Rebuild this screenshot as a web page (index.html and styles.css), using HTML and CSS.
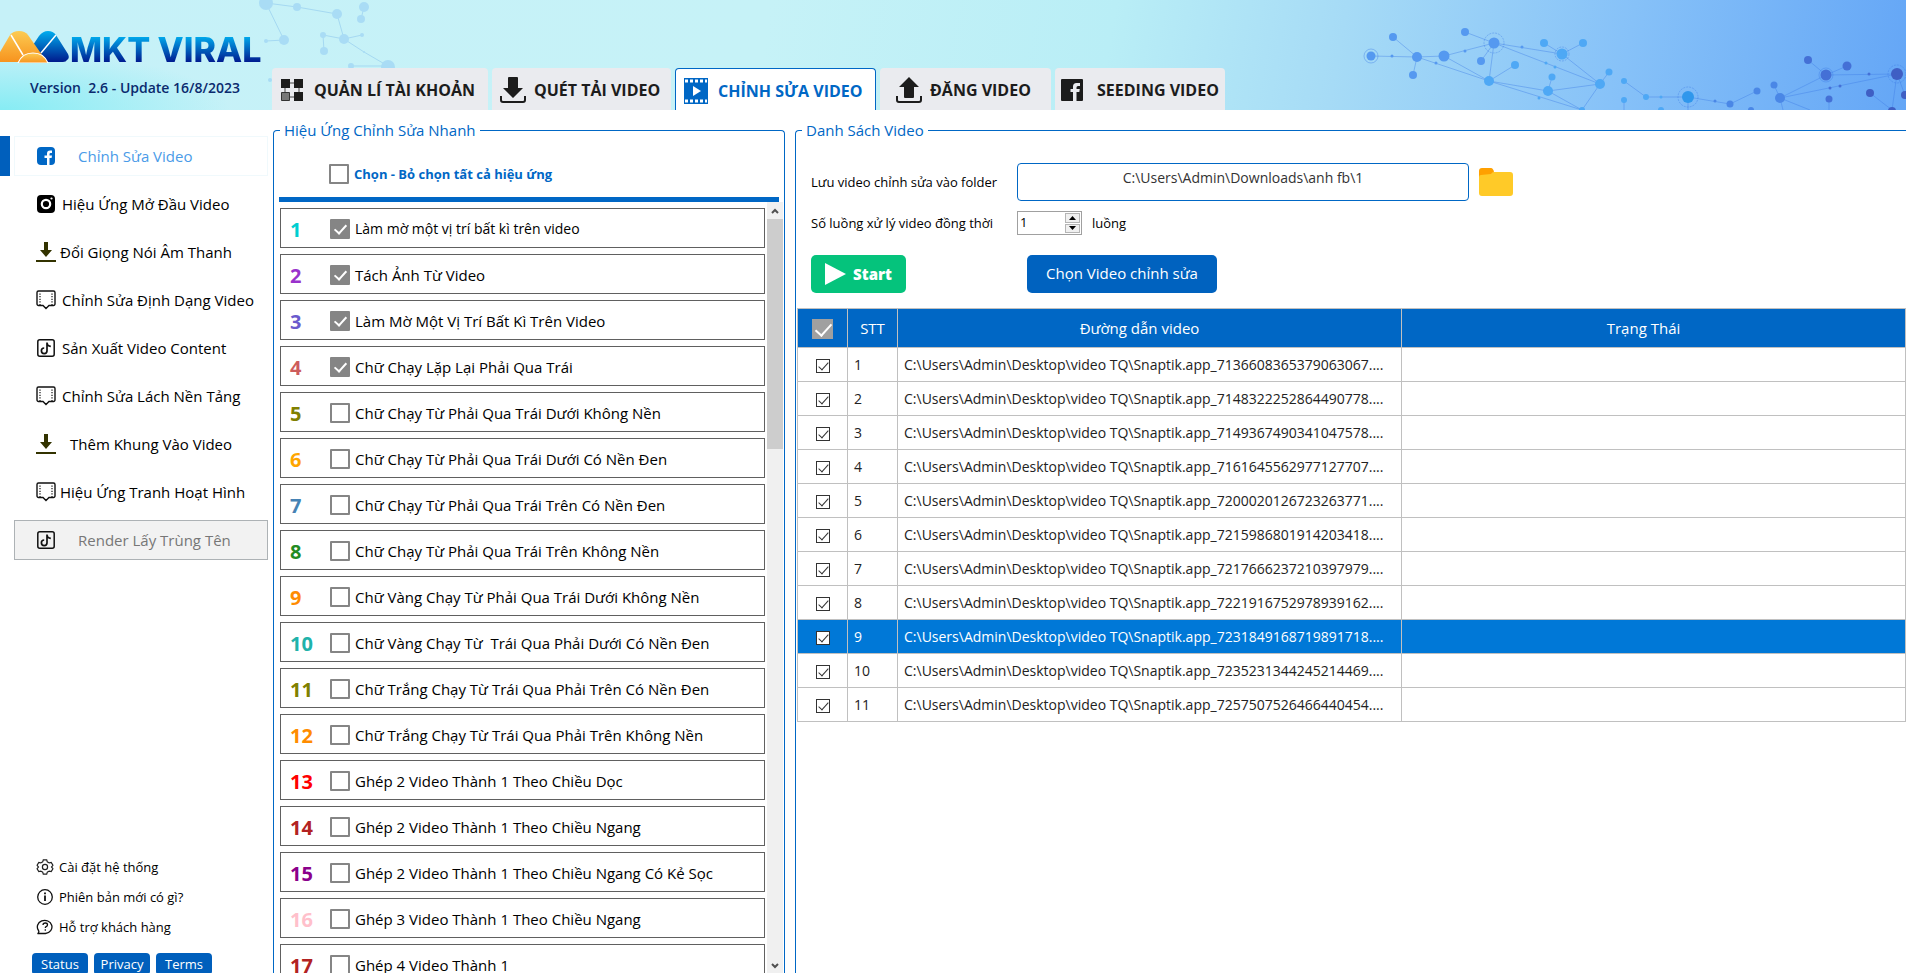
FILE: index.html
```html
<!DOCTYPE html>
<html lang="vi">
<head>
<meta charset="utf-8">
<title>MKT Viral</title>
<link rel="stylesheet" href="styles.css">
</head>
<body>
<svg class="defs" aria-hidden="true">
  <symbol id="i-download" viewBox="0 0 20 20"><path d="M8 0h4v8h4l-6 7-6-7h4zM0 18h20v2H0z" fill="#333300"/></symbol>
  <symbol id="i-frame" viewBox="0 0 20 20"><path d="M2.500 1h15a1.500 1.500 0 0 1 1.500 1.500v11.500a1.500 1.500 0 0 1-1.500 1.500h-4.500l-3 3-3-3h-4.500a1.500 1.500 0 0 1-1.500-1.500v-11.500a1.500 1.500 0 0 1 1.500-1.500z" fill="none" stroke="#111" stroke-width="1.400"/><path d="M4 3.500v12M16 3.500v12" stroke="#111" stroke-width="1.200" stroke-dasharray="1.200 1.400"/></symbol>
  <symbol id="i-tiktok" viewBox="0 0 20 20"><rect x="1.800" y="1.800" width="16.400" height="16.400" rx="2" fill="none" stroke="#111" stroke-width="1.500"/><path d="M11 4.500v8.300a2.800 2.800 0 1 1-2.800-2.800M11 5c.2 2 1.700 3.300 3.800 3.400" fill="none" stroke="#111" stroke-width="1.700"/></symbol>
</svg>

<header class="header">
  <svg class="net net-left" width="420" height="110" aria-hidden="true">
    <path d="M266 3l31 4 40 7 7 25M266 3l18 37-18 1M364 7l-3 12M323 35l21 4 18-4M323 35l1 16M344 39l20 13 24 14-37 0" fill="none" stroke="#a5d9f2"/>
    <g fill="#a9dcf5"><circle cx="266" cy="3" r="7"/><circle cx="297" cy="7" r="4"/><circle cx="337" cy="14" r="5"/><circle cx="364" cy="7" r="5"/><circle cx="361" cy="19" r="4"/><circle cx="344" cy="39" r="5"/><circle cx="323" cy="35" r="3"/><circle cx="324" cy="51" r="4"/><circle cx="362" cy="35" r="2"/><circle cx="284" cy="40" r="5"/><circle cx="266" cy="41" r="2"/><circle cx="364" cy="52" r="1"/><circle cx="388" cy="67" r="7"/><circle cx="351" cy="66" r="3"/><circle cx="270" cy="80" r="2"/></g>
  </svg>
  <svg class="net net-right" width="546" height="110" viewBox="1360 0 546 110" aria-hidden="true">
    <g fill="none" stroke="#3c7be6" stroke-opacity=".4">
      <path d="M1371 56l46 1 27-1 50-13-29-11M1393 37l24 20-4 18M1417 57l72 24 26-16M1444 56l45 25 5-38-13 18M1494 43l68 11 21-11M1544 43l18 11 38 30-52 7-59-10 93 29 18-26 9-12M1494 43l106 41M1552 77l-4 14 34 19M1624 81l22 16h42l42 7 27-13M1688 97v13M1624 100v10"/>
      <path d="M1774 85l6 13 46-23 71-1-117 24 3 12M1780 98l30 12M1808 60l18 15 21-9M1829 99v11M1897 74l-5 36-22-17M1897 74l8 21"/>
      <circle cx="1371" cy="56" r="7"/><circle cx="1494" cy="43" r="10" stroke-dasharray="2 1"/><circle cx="1562" cy="54" r="7" stroke-dasharray="2 1"/><circle cx="1688" cy="97" r="10" stroke-dasharray="2 1"/><circle cx="1826" cy="75" r="7"/><circle cx="1897" cy="74" r="9" stroke-dasharray="2 1"/>
    </g>
    <g fill="#5599f0"><circle cx="1371" cy="56" r="4.500"/><circle cx="1393" cy="37" r="4"/><circle cx="1417" cy="57" r="5"/><circle cx="1413" cy="75" r="4"/><circle cx="1444" cy="56" r="5.500"/><circle cx="1465" cy="32" r="4"/><circle cx="1494" cy="43" r="5.500"/><circle cx="1481" cy="61" r="4"/><circle cx="1392" cy="56" r="1.500"/><circle cx="1436" cy="63" r="1.500"/><circle cx="1465" cy="51" r="1.500"/><circle cx="1522" cy="47" r="1.500"/></g>
    <g fill="#4ea8f5"><circle cx="1515" cy="65" r="4"/><circle cx="1489" cy="81" r="5"/><circle cx="1544" cy="43" r="4"/><circle cx="1583" cy="43" r="4"/><circle cx="1562" cy="54" r="5.500"/><circle cx="1552" cy="77" r="3.500"/><circle cx="1548" cy="91" r="5"/><circle cx="1600" cy="84" r="5"/><circle cx="1609" cy="72" r="3.500"/><circle cx="1624" cy="81" r="3"/><circle cx="1624" cy="100" r="3"/><circle cx="1646" cy="97" r="3"/><circle cx="1661" cy="97" r="1.500"/><circle cx="1661" cy="110" r="3"/><circle cx="1582" cy="110" r="3"/><circle cx="1546" cy="63" r="1.500"/><circle cx="1555" cy="67" r="1.500"/><circle cx="1539" cy="98" r="1.500"/></g>
    <circle cx="1688" cy="97" r="6" fill="#2f97ec"/>
    <g fill="#4a87e6"><circle cx="1715" cy="101" r="1.500"/><circle cx="1730" cy="104" r="3.500"/><circle cx="1757" cy="91" r="3.500"/><circle cx="1751" cy="110" r="3"/><circle cx="1774" cy="85" r="3.500"/><circle cx="1780" cy="98" r="5"/></g>
    <g fill="#4470d6"><circle cx="1808" cy="60" r="4"/><circle cx="1826" cy="75" r="5.500"/><circle cx="1847" cy="66" r="4.500"/><circle cx="1829" cy="99" r="3.500"/><circle cx="1830" cy="88" r="1.500"/><circle cx="1840" cy="86" r="1.500"/><circle cx="1869" cy="74" r="1.500"/></g>
    <g fill="#3f5fc4"><circle cx="1897" cy="74" r="6"/><circle cx="1870" cy="93" r="4"/><circle cx="1905" cy="95" r="4"/><circle cx="1892" cy="111" r="4"/></g>
  </svg>
  <div class="brand">
    <div class="logo">
      <svg width="70" height="32" viewBox="0 0 70 32" aria-hidden="true">
        <defs>
          <linearGradient id="go" x1="0" y1="0" x2="0" y2="1"><stop offset="0" stop-color="#fccb52"/><stop offset="1" stop-color="#f7931e"/></linearGradient>
          <linearGradient id="gb" x1="0" y1="0" x2="0" y2="1"><stop offset="0" stop-color="#00aeef"/><stop offset="1" stop-color="#001a8c"/></linearGradient>
        </defs>
        <path d="M33 14l6-9q4-5 9-5t8 4l12 19q2 4-1 6-1 2-4 2H45z" fill="url(#gb)"/>
        <path d="M0 21L10 4q3-4 9-4t9 4l19 27H0z" fill="url(#go)"/>
        <path d="M18 32q4-10 15-10t15 10z" fill="url(#go)" stroke="#fff" stroke-width="1.200"/>
        <path d="M11 4l12 20M56 4L41 22" stroke="#fff" stroke-width="1.500" fill="none"/>
      </svg>
      <span class="logo-text">MKT VIRAL</span>
    </div>
    <p class="version">Version&nbsp; 2.6 - Update 16/8/2023</p>
  </div>
  <nav class="tabs">
    <button class="tab tab-1"><svg width="24" height="24" viewBox="0 0 24 24"><path d="M5 5h14v14H5z" fill="none" stroke="#444"/><path d="M1 1h9v9H1zM14 1h9v9h-9zM14 14h9v9h-9z" fill="#1c1c1c"/><path d="M1.500 14.500h8v8h-8z" fill="#777" stroke="#333"/></svg>QUẢN LÍ TÀI KHOẢN</button>
    <button class="tab tab-2"><svg width="26" height="26" viewBox="0 0 26 26"><path d="M9 0h8q1 0 1 1v10h5L13 21 3 11h5V1q0-1 1-1z" fill="#1c1c1c"/><path d="M1 19v4q0 2 2 2h20q2 0 2-2v-4" fill="none" stroke="#1c1c1c" stroke-width="2"/></svg>QUÉT TẢI VIDEO</button>
    <button class="tab tab-3 active"><svg width="24" height="26" viewBox="0 0 24 26"><path d="M0 0h24v26H0z" fill="#0067c5"/><path d="M1 3h22M1 23h22" stroke="#fff" stroke-width="3" stroke-dasharray="3 2"/><path d="M9 8l8 5-8 5z" fill="#fff"/></svg>CHỈNH SỬA VIDEO</button>
    <button class="tab tab-4"><svg width="26" height="26" viewBox="0 0 26 26"><path d="M13 0l10 10h-5v10q0 1-1 1H9q-1 0-1-1V10H3z" fill="#1c1c1c"/><path d="M1 19v4q0 2 2 2h20q2 0 2-2v-4" fill="none" stroke="#1c1c1c" stroke-width="2"/></svg>ĐĂNG VIDEO</button>
    <button class="tab tab-5"><svg width="22" height="22" viewBox="0 0 22 22"><rect width="22" height="22" rx="1" fill="#1c1c1c"/><path d="M12 22v-9H9.500v-3H12V7.500Q12 4 15.500 4H19v3h-2q-1.500 0-1.500 1.500V10h3.300l-.5 3h-2.800v9z" fill="#eaebef"/></svg>SEEDING VIDEO</button>
  </nav>
</header>

<main class="main">
  <aside class="sidebar">
    <nav class="menu">
      <div class="current"><button class="item gap-xl"><svg width="20" height="20" viewBox="0 0 20 20"><rect x="1" y="1" width="18" height="18" rx="4" fill="#0067c5"/><path d="M11 19v-7H8.500V9.500H11V7.500Q11 4.500 14 4.500h2V7h-1.300q-1.200 0-1.200 1.200v1.300H16L15.600 12h-2.100v7z" fill="#fff"/></svg>Chỉnh Sửa Video</button></div>
      <button class="item gap-m"><svg width="20" height="20" viewBox="0 0 20 20"><rect x="1" y="1" width="18" height="18" rx="4" fill="#000"/><circle cx="10" cy="10" r="4.200" fill="none" stroke="#fff" stroke-width="2.200"/><circle cx="15.500" cy="4.500" r="1.100" fill="#fff"/></svg>Hiệu Ứng Mở Đầu Video</button>
      <button class="item gap-s"><svg width="20" height="20"><use href="#i-download"/></svg>Đổi Giọng Nói Âm Thanh</button>
      <button class="item gap-m"><svg width="20" height="20"><use href="#i-frame"/></svg>Chỉnh Sửa Định Dạng Video</button>
      <button class="item gap-m"><svg width="20" height="20"><use href="#i-tiktok"/></svg>Sản Xuất Video Content</button>
      <button class="item gap-m"><svg width="20" height="20"><use href="#i-frame"/></svg>Chỉnh Sửa Lách Nền Tảng</button>
      <button class="item gap-l"><svg width="20" height="20"><use href="#i-download"/></svg>Thêm Khung Vào Video</button>
      <button class="item gap-s"><svg width="20" height="20"><use href="#i-frame"/></svg>Hiệu Ứng Tranh Hoạt Hình</button>
      <button class="item disabled gap-xl" disabled><svg width="20" height="20"><use href="#i-tiktok"/></svg>Render Lấy Trùng Tên</button>
    </nav>
    <div class="support">
      <a href="#" class="link"><svg width="18" height="18" viewBox="0 0 18 18" fill="none" stroke="#222" stroke-width="1.200"><path d="M7.300 1.800h3.400l.6 2 1.900 1.100 2-.5 1.700 2.900L15.500 9l1.400 1.700-1.700 2.900-2-.5-1.900 1.100-.6 2H7.300l-.6-2-1.900-1.100-2 .5-1.700-2.900L2.500 9 1.100 7.300l1.700-2.900 2 .5 1.900-1.100z"/><circle cx="9" cy="9" r="2.600"/></svg>Cài đặt hệ thống</a>
      <a href="#" class="link"><svg width="18" height="18" viewBox="0 0 18 18"><circle cx="9" cy="9" r="7.300" fill="none" stroke="#111" stroke-width="1.300"/><path d="M9 7.500v5.500M9 4.500v1.800" stroke="#111" stroke-width="1.800"/></svg>Phiên bản mới có gì?</a>
      <a href="#" class="link"><svg width="18" height="18" viewBox="0 0 18 18" fill="none" stroke="#111" stroke-width="1.300"><path d="M2.500 12.500A7.300 6.600 0 1 1 9.500 15.500H1.500q2-1 1-3z"/><path d="M7 7q0-2 2.300-2 2.200 0 2.200 1.800 0 1.200-1.300 1.800-.9.400-.9 1.400M9.300 11.200v1.500"/></svg>Hỗ trợ khách hàng</a>
      <div class="pills"><button class="pill">Status</button><button class="pill">Privacy</button><button class="pill">Terms</button></div>
    </div>
  </aside>

  <fieldset class="group effects">
    <legend>Hiệu Ứng Chỉnh Sửa Nhanh</legend>
    <label class="check-all"><input type="checkbox" class="box">Chọn - Bỏ chọn tất cả hiệu ứng</label>
    <div class="scroller">
      <ul class="list">
        <li class="effect turquoise small"><b>1</b><label><input type="checkbox" class="box" checked>Làm mờ một vị trí bất kì trên video</label></li>
        <li class="effect orchid"><b>2</b><label><input type="checkbox" class="box" checked>Tách Ảnh Từ Video</label></li>
        <li class="effect slate"><b>3</b><label><input type="checkbox" class="box" checked>Làm Mờ Một Vị Trí Bất Kì Trên Video</label></li>
        <li class="effect indian"><b>4</b><label><input type="checkbox" class="box" checked>Chữ Chạy Lặp Lại Phải Qua Trái</label></li>
        <li class="effect olive"><b>5</b><label><input type="checkbox" class="box">Chữ Chạy Từ Phải Qua Trái Dưới Không Nền</label></li>
        <li class="effect orange"><b>6</b><label><input type="checkbox" class="box">Chữ Chạy Từ Phải Qua Trái Dưới Có Nền Đen</label></li>
        <li class="effect steel"><b>7</b><label><input type="checkbox" class="box">Chữ Chạy Từ Phải Qua Trái Trên Có Nền Đen</label></li>
        <li class="effect forest"><b>8</b><label><input type="checkbox" class="box">Chữ Chạy Từ Phải Qua Trái Trên Không Nền</label></li>
        <li class="effect dark-orange"><b>9</b><label><input type="checkbox" class="box">Chữ Vàng Chạy Từ Phải Qua Trái Dưới Không Nền</label></li>
        <li class="effect sea"><b>10</b><label><input type="checkbox" class="box">Chữ Vàng Chạy Từ&nbsp; Trái Qua Phải Dưới Có Nền Đen</label></li>
        <li class="effect olive"><b>11</b><label><input type="checkbox" class="box">Chữ Trắng Chạy Từ Trái Qua Phải Trên Có Nền Đen</label></li>
        <li class="effect dark-orange"><b>12</b><label><input type="checkbox" class="box">Chữ Trắng Chạy Từ Trái Qua Phải Trên Không Nền</label></li>
        <li class="effect red"><b>13</b><label><input type="checkbox" class="box">Ghép 2 Video Thành 1 Theo Chiều Dọc</label></li>
        <li class="effect brick"><b>14</b><label><input type="checkbox" class="box">Ghép 2 Video Thành 1 Theo Chiều Ngang</label></li>
        <li class="effect magenta"><b>15</b><label><input type="checkbox" class="box">Ghép 2 Video Thành 1 Theo Chiều Ngang Có Kẻ Sọc</label></li>
        <li class="effect pink"><b>16</b><label><input type="checkbox" class="box">Ghép 3 Video Thành 1 Theo Chiều Ngang</label></li>
        <li class="effect brick"><b>17</b><label><input type="checkbox" class="box">Ghép 4 Video Thành 1</label></li>
      </ul>
      <div class="scrollbar">
        <svg width="16" height="17" viewBox="0 0 16 17"><path d="M5 11l3-3 3 3" fill="none" stroke="#505050" stroke-width="2"/></svg>
        <span class="thumb"></span>
        <svg class="down" width="16" height="17" viewBox="0 0 16 17"><path d="M5 8l3 3 3-3" fill="none" stroke="#505050" stroke-width="2"/></svg>
      </div>
    </div>
  </fieldset>

  <fieldset class="group videos">
    <legend>Danh Sách Video</legend>
    <div class="form">
      <label for="folder">Lưu video chỉnh sửa vào folder</label>
      <div class="field">
        <input id="folder" class="path" type="text" value="C:\Users\Admin\Downloads\anh fb\1">
        <button class="folder" aria-label="Folder"><svg width="34" height="30" viewBox="0 0 34 30"><path d="M0 10V4q0-3 3-3h9q2 0 3 4v5z" fill="#ffa000"/><path d="M0 10q0-2 2-2l10-1q1-2 3-2h16q3 0 3 3v18q0 3-3 3H3q-3 0-3-3z" fill="#ffca28"/></svg></button>
      </div>
      <label for="threads">Số luồng xử lý video đồng thời</label>
      <div class="field">
        <div class="spin">
          <input id="threads" type="text" value="1">
          <div class="steps">
            <button aria-label="+"><svg width="7" height="4" viewBox="0 0 7 4"><path d="M0 4l3.500-4L7 4z"/></svg></button>
            <button aria-label="-"><svg width="7" height="4" viewBox="0 0 7 4"><path d="M0 0l3.500 4L7 0z"/></svg></button>
          </div>
        </div>
        <span>luồng</span>
      </div>
      <button class="start"><svg width="21" height="22" viewBox="0 0 21 22"><path d="M0 0l21 11L0 22z" fill="#fff"/></svg>Start</button>
      <button class="choose">Chọn Video chỉnh sửa</button>
    </div>
    <table class="table">
      <colgroup><col class="c-check"><col class="c-num"><col><col></colgroup>
      <thead><tr><th><input type="checkbox" class="head-box" checked aria-label="Chọn tất cả"></th><th>STT</th><th class="wide">Đường dẫn video</th><th class="wide">Trạng Thái</th></tr></thead>
      <tbody>
        <tr><td><input type="checkbox" class="tick" checked aria-label="1"></td><td>1</td><td>C:\Users\Admin\Desktop\video TQ\Snaptik.app_7136608365379063067....</td><td></td></tr>
        <tr><td><input type="checkbox" class="tick" checked aria-label="2"></td><td>2</td><td>C:\Users\Admin\Desktop\video TQ\Snaptik.app_7148322252864490778....</td><td></td></tr>
        <tr><td><input type="checkbox" class="tick" checked aria-label="3"></td><td>3</td><td>C:\Users\Admin\Desktop\video TQ\Snaptik.app_7149367490341047578....</td><td></td></tr>
        <tr><td><input type="checkbox" class="tick" checked aria-label="4"></td><td>4</td><td>C:\Users\Admin\Desktop\video TQ\Snaptik.app_7161645562977127707....</td><td></td></tr>
        <tr><td><input type="checkbox" class="tick" checked aria-label="5"></td><td>5</td><td>C:\Users\Admin\Desktop\video TQ\Snaptik.app_7200020126723263771....</td><td></td></tr>
        <tr><td><input type="checkbox" class="tick" checked aria-label="6"></td><td>6</td><td>C:\Users\Admin\Desktop\video TQ\Snaptik.app_7215986801914203418....</td><td></td></tr>
        <tr><td><input type="checkbox" class="tick" checked aria-label="7"></td><td>7</td><td>C:\Users\Admin\Desktop\video TQ\Snaptik.app_7217666237210397979....</td><td></td></tr>
        <tr><td><input type="checkbox" class="tick" checked aria-label="8"></td><td>8</td><td>C:\Users\Admin\Desktop\video TQ\Snaptik.app_7221916752978939162....</td><td></td></tr>
        <tr class="selected"><td><input type="checkbox" class="tick" checked aria-label="9"></td><td>9</td><td>C:\Users\Admin\Desktop\video TQ\Snaptik.app_7231849168719891718....</td><td></td></tr>
        <tr><td><input type="checkbox" class="tick" checked aria-label="10"></td><td>10</td><td>C:\Users\Admin\Desktop\video TQ\Snaptik.app_7235231344245214469....</td><td></td></tr>
        <tr><td><input type="checkbox" class="tick" checked aria-label="11"></td><td>11</td><td>C:\Users\Admin\Desktop\video TQ\Snaptik.app_7257507526466440454....</td><td></td></tr>
      </tbody>
    </table>
  </fieldset>
</main>
</body>
</html>
```
FILE: styles.css
```css
* { box-sizing: border-box; }

body {
  margin: 0;
  height: 100vh;
  display: flex;
  flex-direction: column;
  overflow: hidden;
  background: #fff;
  color: #000;
  font-family: "Open Sans", "Noto Sans", sans-serif;
  font-size: 15px;
  line-height: 20px;
}

button, input { font: inherit; color: inherit; margin: 0; }
button { border: 0; background: none; padding: 0; white-space: nowrap; }
svg { flex: none; display: block; }
.defs { position: absolute; width: 0; height: 0; }

/* Header */
.header {
  position: relative;
  flex: none;
  display: flex;
  height: 110px;
  background:
    radial-gradient(ellipse 230px 60px at 0 110px, #86ecf4, transparent),
    linear-gradient(100deg, #c6f1f8 0%, #c6f2f7 40%, #b9eef6 58%, #a6dbf6 70%, #86c1f8 85%, #64a6f6 100%);
}
.net { position: absolute; top: 0; }
.net-left { left: 0; }
.net-right { right: 0; }
.brand { position: relative; width: 272px; flex: none; padding-top: 31px; }
.logo { display: flex; height: 32px; align-items: center; }
.logo-text {
  padding-top: 6px;
  font: 800 34px/40px Inter, sans-serif;
  white-space: nowrap;
  background: linear-gradient(#00b0f0 25%, #00158c 85%);
  background-clip: text;
  -webkit-background-clip: text;
  color: transparent;
}
.version { margin: 15px 0 0 30px; color: #0a2a6e; font-size: 14px; font-weight: 600; white-space: nowrap; }
.tabs { position: relative; display: flex; align-items: flex-end; gap: 4px; }
.tab {
  display: flex;
  align-items: center;
  gap: 10px;
  height: 42px;
  padding: 2px 0 0 8px;
  border-radius: 4px 4px 0 0;
  background: #eaebef;
  color: #1c1c1c;
  font-size: 16px;
  font-weight: 700;
}
.tab-1 { width: 216px; }
.tab-2 { width: 179px; gap: 8px; }
.tab-3 { width: 201px; }
.tab-4 { width: 171px; padding-left: 16px; gap: 8px; }
.tab-5 { width: 170px; padding-left: 6px; gap: 14px; }
.tab.active { background: #fff; color: #0067c5; border: 1px solid #0067c5; border-bottom: 0; }

/* Sidebar */
.main { flex: 1; min-height: 0; display: flex; }
.sidebar { width: 273px; flex: none; display: flex; flex-direction: column; justify-content: space-between; }
.menu { display: grid; gap: 8px; padding-top: 26px; }
.item { display: flex; align-items: center; height: 40px; margin: 0 5px 0 14px; padding-left: 21px; border: 1px solid transparent; }
.gap-s { gap: 4px; }
.gap-m { gap: 6px; }
.gap-l { gap: 14px; }
.gap-xl { gap: 22px; }
.current { display: flex; border-left: 10px solid #005fbc; color: #4a9be8; }
.current .item { flex: 1; margin-left: 4px; border-color: #f0f9fc; }
.disabled { background: #f2f2f2; border-color: #adb2b5; color: #777; }
.support { display: flex; flex-direction: column; padding-left: 32px; }
.link { display: flex; align-items: center; gap: 5px; height: 30px; padding-left: 4px; color: #000; font-size: 13px; text-decoration: none; }
.pills { display: flex; gap: 6px; height: 31px; padding-top: 11px; }
.pill { height: 22px; width: 56px; flex: none; border-radius: 4px; background: #005fbc; color: #fff; font-size: 13px; line-height: 18px; }

/* Groups */
.group {
  display: flex;
  flex-direction: column;
  min-width: 0;
  margin: 10px 0 0;
  padding: 0;
  border: 1px solid #0067c5;
  border-bottom: 0;
  border-radius: 4px 4px 0 0;
}
.group legend { margin-left: 6px; padding: 0 4px; color: #0067c5; }
.effects { width: 512px; flex: none; }
.videos { flex: 1; margin-left: 10px; border-right: 0; border-top-right-radius: 0; }

.check-all {
  display: flex;
  align-items: center;
  gap: 5px;
  height: 62px;
  margin: 0 5px;
  padding: 10px 0 0 50px;
  border-bottom: 5px solid #0067c5;
  color: #0067c5;
  font-size: 13px;
  font-weight: 700;
}
.box {
  appearance: none;
  flex: none;
  width: 20px;
  height: 20px;
  border: 2px solid #858585;
  border-radius: 1px;
  background: #fff;
}
.box:checked { background: #858585; position: relative; }
.box:checked::after {
  content: "";
  position: absolute;
  left: 5px;
  top: 1px;
  width: 5px;
  height: 10px;
  border: solid #fff;
  border-width: 0 2px 2px 0;
  transform: rotate(42deg);
}
.scroller { display: flex; justify-content: space-between; height: calc(100vh - 202px); overflow: hidden; padding: 0 1px 0 6px; }
.list { flex: 1; display: flex; flex-direction: column; gap: 6px; margin: 0 2px 0 0; padding: 6px 0 0; list-style: none; }
.effect { display: flex; align-items: center; flex: none; height: 40px; border: 1px solid #606060; padding: 2px 0 0 9px; }
.effect b { width: 40px; padding-top: 2px; font-family: "Noto Sans", sans-serif; font-size: 20px; }
.effect label { display: flex; align-items: center; gap: 5px; color: #000; }
.effect.small label { font-size: 14px; }
.scrollbar { width: 16px; display: flex; flex-direction: column; background: #f0f0f0; }
.thumb { height: 230px; background: #cdcdcd; }
.down { margin-top: auto; }
.turquoise { color: #00ced1; }
.orchid { color: #9932cc; }
.slate { color: #6a5acd; }
.indian { color: #cd5c5c; }
.olive { color: #808000; }
.orange { color: #ffa500; }
.steel { color: #4682b4; }
.forest { color: #228b22; }
.dark-orange { color: #ff8c00; }
.sea { color: #20b2aa; }
.red { color: #ff0000; }
.brick { color: #b22222; }
.magenta { color: #8b008b; }
.pink { color: #ffc0cb; }
.effect b { flex: none; }

/* Video form */
.form {
  display: grid;
  grid-template-columns: 206px 1fr;
  align-items: center;
  row-gap: 10px;
  padding: 23px 0 15px 15px;
}
.form label, .field { font-size: 13px; }
.field { display: flex; align-items: center; gap: 10px; }
.path {
  width: 452px;
  height: 38px;
  padding: 0 0 10px;
  border: 1px solid #0067c5;
  border-radius: 4px;
  color: #333;
  font-size: 14px;
  text-align: center;
}
.spin { display: flex; width: 65px; height: 24px; border: 1px solid #a0a0a0; padding: 1px; }
.spin input { width: 46px; padding: 0 0 2px 1px; border: 0; }
.steps { flex: 1; display: flex; flex-direction: column; gap: 1px; }
.steps button { flex: 1; display: flex; align-items: center; justify-content: center; border: 1px solid #b5b5b5; background: #f0f0f0; }
.start, .choose { height: 38px; margin-top: 10px; border-radius: 5px; color: #fff; }
.start { display: flex; align-items: center; justify-content: center; gap: 7px; width: 95px; background: #05c37c; font-weight: 800; }
.choose { width: 190px; margin-left: 10px; padding-bottom: 2px; background: #0062bf; }

/* Table */
.table { width: calc(100% - 1px); margin-left: 1px; border-collapse: collapse; table-layout: fixed; color: #222; font-size: 14px; }
.c-check, .c-num { width: 50px; }
.table th { height: 39px; padding: 0; background: #0067c5; color: #fff; font-size: 15px; font-weight: 400; }
.table .wide { padding-right: 20px; }
.table th, .table td { border: 1px solid #c0c0c0; }
.table td { height: 34px; padding: 0 0 0 6px; overflow: hidden; white-space: nowrap; }
.table td:first-child { padding: 0; text-align: center; }
.table input { appearance: none; position: relative; display: inline-block; vertical-align: middle; }
.tick { width: 14px; height: 14px; border: 1px solid #333; background: #fff; }
.tick::after, .head-box::after {
  content: "";
  position: absolute;
  left: 4px;
  top: 0;
  width: 4px;
  height: 9px;
  border: solid #333;
  border-width: 0 1px 1px 0;
  transform: rotate(42deg);
}
.head-box { width: 21px; height: 20px; background: #a0a0a0; }
.head-box::after { left: 7px; top: 1px; width: 7px; height: 14px; border-color: #fff; border-width: 0 2px 2px 0; }
.selected { background: #0078d7; color: #fff; }
```
